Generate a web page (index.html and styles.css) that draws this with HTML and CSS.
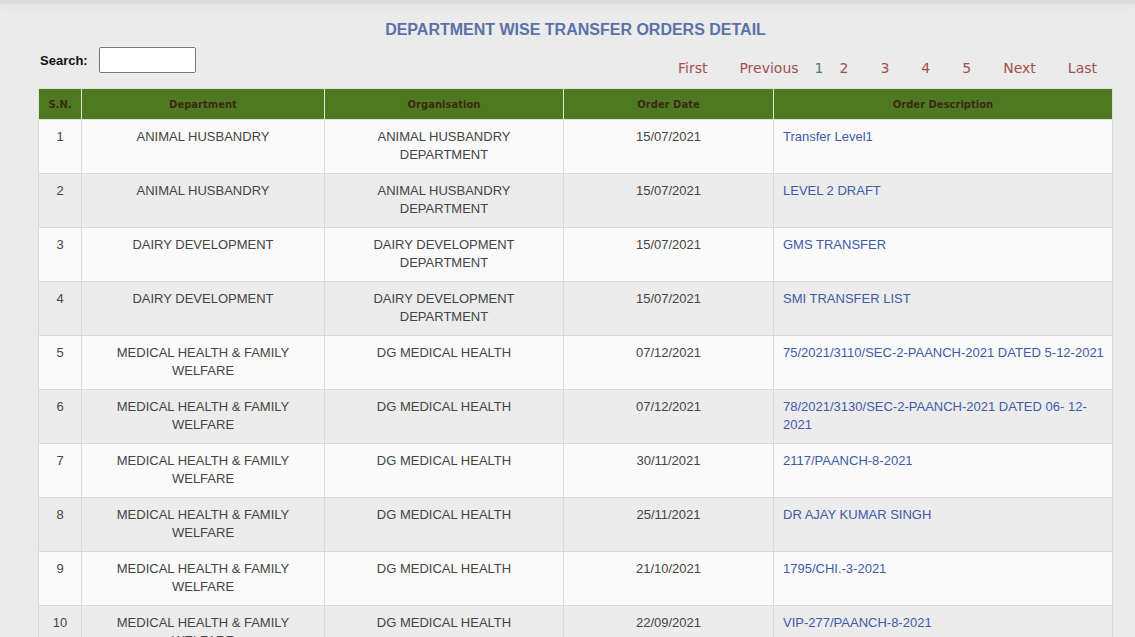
FILE: index.html
```html
<!DOCTYPE html>
<html lang="en">
<head>
  <meta charset="UTF-8">
  <title>Department Wise Transfer Orders Detail</title>
  <link rel="stylesheet" href="styles.css">
</head>
<body>
  <div class="topbar"></div>

  <div class="wrap">
    <h2 class="title">DEPARTMENT WISE TRANSFER ORDERS DETAIL</h2>

    <div class="toolbar">
      <div class="search">
        <label for="q">Search:</label>
        <input type="text" id="q">
      </div>
      <div class="pager">
        <a href="#">First</a>
        <a href="#">Previous</a>
        <span class="current">1</span>
        <a href="#">2</a>
        <a href="#">3</a>
        <a href="#">4</a>
        <a href="#">5</a>
        <a href="#">Next</a>
        <a href="#">Last</a>
      </div>
    </div>

    <table class="grid">
      <thead>
        <tr>
          <th class="c-sn">S.N.</th>
          <th class="c-dept">Department</th>
          <th class="c-org">Organisation</th>
          <th class="c-date">Order Date</th>
          <th class="c-desc">Order Description</th>
        </tr>
      </thead>
      <tbody>
        <tr>
          <td>1</td>
          <td>ANIMAL HUSBANDRY</td>
          <td>ANIMAL HUSBANDRY DEPARTMENT</td>
          <td>15/07/2021</td>
          <td class="desc"><a href="#">Transfer Level1</a></td>
        </tr>
        <tr>
          <td>2</td>
          <td>ANIMAL HUSBANDRY</td>
          <td>ANIMAL HUSBANDRY DEPARTMENT</td>
          <td>15/07/2021</td>
          <td class="desc"><a href="#">LEVEL 2 DRAFT</a></td>
        </tr>
        <tr>
          <td>3</td>
          <td>DAIRY DEVELOPMENT</td>
          <td>DAIRY DEVELOPMENT DEPARTMENT</td>
          <td>15/07/2021</td>
          <td class="desc"><a href="#">GMS TRANSFER</a></td>
        </tr>
        <tr>
          <td>4</td>
          <td>DAIRY DEVELOPMENT</td>
          <td>DAIRY DEVELOPMENT DEPARTMENT</td>
          <td>15/07/2021</td>
          <td class="desc"><a href="#">SMI TRANSFER LIST</a></td>
        </tr>
        <tr>
          <td>5</td>
          <td>MEDICAL HEALTH &amp; FAMILY WELFARE</td>
          <td>DG MEDICAL HEALTH</td>
          <td>07/12/2021</td>
          <td class="desc"><a href="#">75/2021/3110/SEC-2-PAANCH-2021 DATED 5-12-2021</a></td>
        </tr>
        <tr>
          <td>6</td>
          <td>MEDICAL HEALTH &amp; FAMILY WELFARE</td>
          <td>DG MEDICAL HEALTH</td>
          <td>07/12/2021</td>
          <td class="desc"><a href="#">78/2021/3130/SEC-2-PAANCH-2021 DATED 06- 12-2021</a></td>
        </tr>
        <tr>
          <td>7</td>
          <td>MEDICAL HEALTH &amp; FAMILY WELFARE</td>
          <td>DG MEDICAL HEALTH</td>
          <td>30/11/2021</td>
          <td class="desc"><a href="#">2117/PAANCH-8-2021</a></td>
        </tr>
        <tr>
          <td>8</td>
          <td>MEDICAL HEALTH &amp; FAMILY WELFARE</td>
          <td>DG MEDICAL HEALTH</td>
          <td>25/11/2021</td>
          <td class="desc"><a href="#">DR AJAY KUMAR SINGH</a></td>
        </tr>
        <tr>
          <td>9</td>
          <td>MEDICAL HEALTH &amp; FAMILY WELFARE</td>
          <td>DG MEDICAL HEALTH</td>
          <td>21/10/2021</td>
          <td class="desc"><a href="#">1795/CHI.-3-2021</a></td>
        </tr>
        <tr>
          <td>10</td>
          <td>MEDICAL HEALTH &amp; FAMILY WELFARE</td>
          <td>DG MEDICAL HEALTH</td>
          <td>22/09/2021</td>
          <td class="desc"><a href="#">VIP-277/PAANCH-8-2021</a></td>
        </tr>
      </tbody>
    </table>
  </div>
</body>
</html>
```

FILE: styles.css
```css
body {
  margin: 0;
  background: #ebebeb;
  font-family: Arial, "Liberation Sans", sans-serif;
  color: #444;
}

.topbar {
  height: 4px;
  background: #dcdcdc;
  box-shadow: 0 2px 6px rgba(0, 0, 0, 0.06);
}

.wrap {
  width: 1075px;
  margin-left: 38px;
}

.title {
  margin: 0;
  padding-top: 17px;
  height: 20px;
  text-align: center;
  font-size: 16px;
  font-weight: bold;
  color: #5a72a8;
}

.toolbar {
  display: flex;
  justify-content: space-between;
  height: 47px;
}

.search {
  display: flex;
  align-items: center;
  gap: 11px;
  height: 26px;
  margin-top: 6px;
}

.search label {
  font-size: 13px;
  font-weight: bold;
  color: #111;
  padding-left: 2px;
}

.search input {
  width: 97px;
  height: 26px;
  box-sizing: border-box;
  border: 1px solid #777;
  border-radius: 2px;
  background: #fff;
  margin: 0;
}

.pager {
  display: flex;
  align-items: center;
  height: 20px;
  margin-top: 17px;
  font-family: Verdana, "DejaVu Sans", sans-serif;
  font-size: 14px;
}

.pager a {
  color: #a04f50;
  text-decoration: none;
  padding: 0 16px;
}

.pager .current {
  color: #4f7f5a;
}

.grid {
  width: 1075px;
  border-collapse: collapse;
  table-layout: fixed;
}

.grid th {
  background: #4f7823;
  color: #3b2a12;
  font-family: Verdana, "DejaVu Sans", sans-serif;
  font-size: 10px;
  font-weight: bold;
  height: 30px;
  padding: 0;
  border: 1px solid #dde6d0;
}

.c-sn { width: 42px; }
.c-dept { width: 242px; }
.c-org { width: 238px; }
.c-date { width: 209px; }

.grid td {
  border: 1px solid #dadada;
  padding: 8px 8px 9px;
  height: 36px;
  vertical-align: top;
  text-align: center;
  font-size: 13px;
  line-height: 18px;
  color: #444;
}

.grid tbody tr:nth-child(odd) td {
  background: #fafafa;
}

.grid tbody tr:nth-child(even) td {
  background: #ececec;
}

.grid td.desc {
  text-align: left;
  padding-left: 9px;
  padding-right: 4px;
}

.grid td.desc a {
  color: #3e5aa8;
  text-decoration: none;
}
```
